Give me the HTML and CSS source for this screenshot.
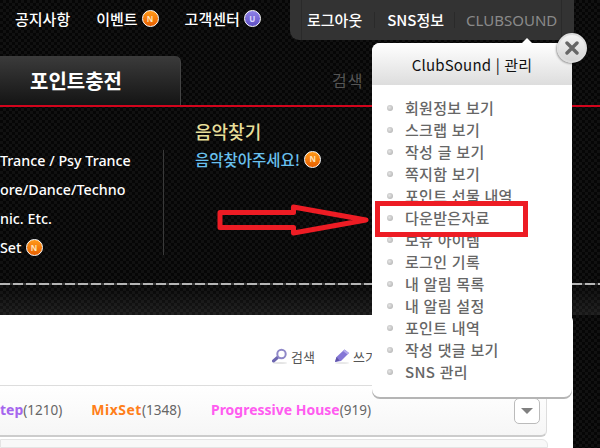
FILE: index.html
```html
<!DOCTYPE html>
<html lang="ko">
<head>
<meta charset="utf-8">
<title>ClubSound</title>
<link rel="stylesheet" href="styles.css">
</head>
<body>
<div class="page">
  <header class="dark">
    <div class="topbar">
      <nav class="gnb">
        <a class="gnb-item">공지사항</a>
        <a class="gnb-item">이벤트<span class="badge">N</span></a>
        <a class="gnb-item">고객센터<span class="badge badge-u">U</span></a>
      </nav>
      <div class="pill">
        <div class="pill-inner">
          <a class="pill-item">로그아웃</a>
          <a class="pill-item">SNS정보</a>
          <a class="pill-item pill-dim">CLUBSOUND</a>
        </div>
      </div>
    </div>
    <div class="tabrow">
      <div class="tab">포인트충전</div>
      <div class="search">검색</div>
    </div>
    <div class="mega">
      <ul class="mega-list">
        <li>Trance / Psy Trance</li>
        <li>ore/Dance/Techno</li>
        <li>nic. Etc.</li>
        <li>Set<span class="badge">N</span></li>
      </ul>
      <div class="mega-side">
        <h3 class="mega-title">음악찾기</h3>
        <a class="mega-link">음악찾아주세요!<span class="badge">N</span></a>
      </div>
    </div>
    <div class="dashes"></div>
  </header>
  <main class="content">
    <div class="tools">
      <a class="tool">
        <svg class="tool-icon" viewBox="0 0 16 16" width="16" height="16"><ellipse cx="8" cy="15" rx="7" ry="1" fill="#e4e4e4"/><path d="M5.500 9.500 1.500 13" stroke="#6d66b0" stroke-width="3" stroke-linecap="round"/><circle cx="9.500" cy="6" r="4.200" fill="#fff" stroke="#8f88c8" stroke-width="2"/></svg>
        검색
      </a>
      <a class="tool">
        <svg class="tool-icon" viewBox="0 0 16 16" width="16" height="16"><ellipse cx="8" cy="15" rx="7" ry="1" fill="#e8e8e8"/><path d="M1 14 2.500 9 10.500 1.500 15 5 7 13Z" fill="#8577d6"/><path d="M1 14 2.500 9 5.500 12.500Z" fill="#5f54a8"/><path d="M10.500 1.500 15 5 13.500 6.500 9 3Z" fill="#b5aceb"/></svg>
        쓰기
      </a>
    </div>
    <div class="filter">
      <span class="cat cat-a">tep<small>(1210)</small></span>
      <span class="cat cat-b">MixSet<small>(1348)</small></span>
      <span class="cat cat-c">Progressive House<small>(919)</small></span>
      <button class="more" type="button" aria-label="더 보기"></button>
    </div>
    <div class="next-box"></div>
  </main>
  <aside class="popup">
    <div class="popup-head">ClubSound | 관리</div>
    <ul class="popup-list">
      <li>회원정보 보기</li>
      <li>스크랩 보기</li>
      <li>작성 글 보기</li>
      <li>쪽지함 보기</li>
      <li>포인트 선물 내역</li>
      <li>다운받은자료</li>
      <li>보유 아이템</li>
      <li>로그인 기록</li>
      <li>내 알림 목록</li>
      <li>내 알림 설정</li>
      <li>포인트 내역</li>
      <li>작성 댓글 보기</li>
      <li>SNS 관리</li>
    </ul>
    <button class="close" type="button" aria-label="닫기">
      <svg viewBox="0 0 14 14" width="14" height="14"><path d="M2 2 12 12M12 2 2 12" stroke="#666" stroke-width="3.400" stroke-linecap="round"/></svg>
    </button>
    <div class="mark"></div>
  </aside>
  <svg class="arrow" viewBox="0 0 156 40" width="156" height="40"><path d="M4 9.500H77.500V4L150 17 77.500 30V24.500H4Z" fill="none" stroke="#ed1c24" stroke-width="5" stroke-linejoin="round"/></svg>
</div>
</body>
</html>
```
FILE: styles.css
```css
* { box-sizing: border-box; }
html, body { margin: 0; padding: 0; }
body { font-family: "Noto Sans CJK KR", "Noto Sans", sans-serif; background: #0a0a0a; }
ul { list-style: none; margin: 0; padding: 0; }
.page {
  position: relative; width: 600px; height: 448px; overflow: hidden;
  background-color: #0a0a0a;
  background-image: conic-gradient(#111 25%, #060606 0 50%, #111 0 75%, #060606 0);
  background-size: 6px 6px;
}
.dark {
  height: 315px; display: flex; flex-direction: column;
  background: linear-gradient(rgba(255,255,255,0) 90%, rgba(255,255,255,0.07));
}
.topbar { height: 56px; display: flex; align-items: flex-start; }
.gnb { width: 290px; height: 37px; padding-left: 15px; display: flex; align-items: center; gap: 26px; }
.gnb-item { display: flex; align-items: center; color: #fff; font-size: 15px; font-weight: 500; white-space: nowrap; }
.badge {
  width: 17px; height: 17px; margin-left: 4px; flex: none;
  display: inline-flex; align-items: center; justify-content: center;
  border-radius: 50%; border: 1.500px solid #fff;
  background: linear-gradient(#ff9a1a, #e85f00);
  color: #ffe3b8; font: 700 8px/1 "Noto Sans", sans-serif;
}
.badge-u { background: linear-gradient(#8f82e8, #5f50c4); color: #dcd8ff; }
.pill {
  width: 284px; height: 40px; padding: 0 12px 0 11px;
  background: #333; border-radius: 0 0 9px 9px;
}
.pill-inner {
  height: 100%; padding-bottom: 1px; display: flex; align-items: center;
  border-left: 1px solid #2a2a2a; border-right: 1px solid #2a2a2a;
}
.pill-item {
  height: 16px; line-height: 16px; padding: 0 12px;
  color: #fff; font-size: 15px; font-weight: 500; white-space: nowrap;
}
.pill-item:first-child { padding-left: 5px; }
.pill-item:nth-child(2) { padding-right: 10px; }
.pill-item + .pill-item { border-left: 1px solid #2a2a2a; }
.pill-dim { padding: 0 4px 0 11px; color: #8a8a8a; font-weight: 400; font-family: "Noto Sans", sans-serif; }
.tabrow { height: 51px; display: flex; border-bottom: 2px solid #d2041c; }
.tab {
  width: 181px; height: 49px; padding-left: 30px; display: flex; align-items: center;
  background: linear-gradient(#3b3b3b, #141414); border-radius: 0 6px 0 0; border-right: 1px solid #444;
  color: #fff; font-size: 20px; font-weight: 700; white-space: nowrap;
}
.search { margin: 12px 0 0 151px; width: 60px; color: #555; font-size: 16px; letter-spacing: 1px; }
.mega { height: 176px; display: flex; }
.mega-list {
  width: 164px; height: 105px; margin-top: 43px; border-right: 1px solid #3a3a3a;
  color: #fff; font: 500 14.300px/29px "Noto Sans", "Noto Sans CJK KR", sans-serif; white-space: nowrap;
}
.mega-list li { display: flex; align-items: center; height: 29px; position: relative; top: -4px; }
.mega-side { padding: 12px 0 0 31px; display: flex; flex-direction: column; }
.mega-title { margin: 0; color: #e8df9a; font-size: 18px; font-weight: 500; line-height: 24px; }
.mega-link { margin-top: 6px; display: flex; align-items: center; color: #69c0ee; font-size: 15.500px; font-weight: 500; line-height: 20px; white-space: nowrap; }
.dashes { height: 2px; background: repeating-linear-gradient(90deg, #b5b5b5 0 10px, #333 10px 13px); }
.content { width: 573px; height: 133px; background: #fff; border-radius: 0 6px 0 0; display: flex; flex-direction: column; }
.tools { height: 70px; padding: 32px 0 0 272px; display: flex; gap: 19px; }
.tool { display: flex; align-items: center; height: 18px; gap: 3px; font-size: 13px; color: #555; white-space: nowrap; }
.tool-icon { flex: none; }
.filter {
  width: 547px; height: 52px; display: flex; align-items: center;
  border-top: 1px solid #ddd; border-bottom: 2px solid #ccc; border-right: 1px solid #ddd;
  border-radius: 0 0 6px 0; background: linear-gradient(#fff, #f6f6f6);
  font: 700 14px/1 "Noto Sans", sans-serif;
}
.cat { white-space: nowrap; }
.cat small { color: #666; font-size: 13.500px; font-weight: 400; }
.cat-a { color: #a566ee; }
.cat-b { color: #ff7f1a; margin-left: 29px; letter-spacing: 0.500px; }
.cat-b small { letter-spacing: 0; }
.cat-c { color: #ff5cf0; margin-left: 30px; }
.more {
  width: 26px; height: 26px; margin-left: 143px; padding: 0; flex: none; position: relative;
  background: #fff; border: 1px solid #bbb; border-radius: 5px;
}
.more::after {
  content: ""; position: absolute; left: 6px; top: 9px;
  border: 6px solid transparent; border-top: 6px solid #808080; border-bottom: 0;
}
.next-box { width: 548px; flex: 1; margin-top: 2px; background: #f8f8f8; border: 1px solid #e4e4e4; border-radius: 0 6px 0 0; }
.popup {
  position: absolute; left: 372px; top: 43px; width: 200px; height: 354px;
  background: #fff; border-radius: 8px; box-shadow: 0 2px 0 #b5b5b5;
}
.popup::before {
  content: ""; position: absolute; left: 150px; top: -5px;
  border: 5px solid transparent; border-bottom: 5px solid #fff; border-top: 0;
}
.popup-head {
  height: 42px; padding-top: 1px; display: flex; align-items: center; justify-content: center;
  background: linear-gradient(#fff, #ddd); border-radius: 8px 8px 0 0;
  color: #111; font-size: 15px; letter-spacing: 0.200px; white-space: nowrap;
}
.popup-list { padding: 12px 0 0 33px; }
.popup-list li {
  position: relative; height: 22px; line-height: 22px;
  color: #666; font-size: 15px; font-weight: 500; letter-spacing: 0.300px; white-space: nowrap;
}
.popup-list li::before {
  content: ""; position: absolute; left: -18px; top: 8px; width: 6px; height: 6px; border-radius: 50%;
  background: radial-gradient(circle at 40% 40%, #e4e4e4, #aaa);
}
.close {
  position: absolute; left: 185px; top: -10px; width: 30px; height: 30px; padding: 0;
  display: flex; align-items: center; justify-content: center;
  border: 2px solid #ddd; border-radius: 50%;
  background: linear-gradient(#f4f4f4, #d4d4d4); box-shadow: -1px 1px 2px rgba(0,0,0,0.35);
}
.mark { position: absolute; left: 3px; top: 158px; width: 153px; height: 36px; border: 5px solid #ed1c24; }
.arrow { position: absolute; left: 216px; top: 203px; }
```
